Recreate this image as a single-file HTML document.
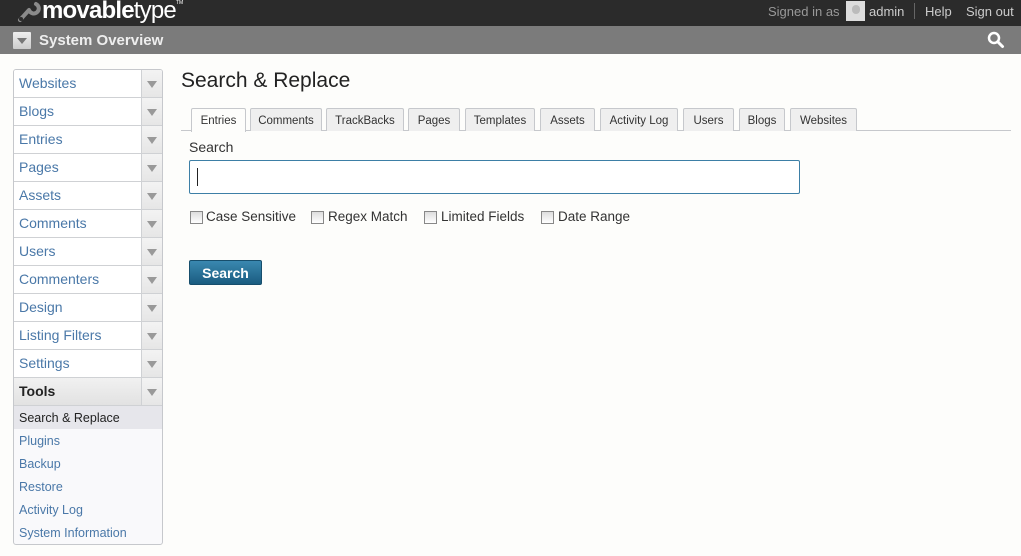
<!DOCTYPE html>
<html><head><meta charset="utf-8"><style>
*{box-sizing:border-box;margin:0;padding:0}
body{width:1021px;height:556px;background:#fdfdfb;font-family:"Liberation Sans",Arial,sans-serif;position:relative;overflow:hidden}
.top{position:absolute;left:0;top:0;width:1021px;height:26px;background:#2b2b2b}
.bar{position:absolute;left:0;top:26px;width:1021px;height:28px;background:#7b7b7b}
.abs{position:absolute}
.side{position:absolute;left:13px;top:69px;width:150px;height:476px;border:1px solid #c6c8cc;border-radius:3px;background:#f9f9fb;overflow:hidden}
.it{height:28px;border-bottom:1px solid #cfd1d4;background:#fff;position:relative;font-size:14px;color:#4a78a8;padding:5px 0 0 5px}
.it:after{content:"";position:absolute;right:0;top:0;width:20px;height:27px;border-left:1px solid #cfd1d4;background:linear-gradient(#f3f3f3,#e6e6e6)}
.it i{position:absolute;right:5px;top:11px;width:0;height:0;border-left:5px solid transparent;border-right:5px solid transparent;border-top:7px solid #999;z-index:2}
.it.t{background:linear-gradient(#f1f1f1,#e2e2e2);color:#222;font-weight:bold}
.sub{height:23px;font-size:12.5px;color:#4a78a8;padding:5px 0 0 5px}
.tab{position:absolute;top:108px;height:23px;border:1px solid #c6c8cc;border-bottom:none;border-radius:2px 2px 0 0;background:#efefef;font-size:11.5px;color:#333;text-align:center;padding-top:6px}
.cb{position:absolute;top:211px;width:13px;height:13px;border:1px solid #888;background:linear-gradient(#ddd,#fff)}
.cl{position:absolute;top:209px;font-size:13.5px;color:#333}
</style></head><body>
<div class="top"></div>
<svg class="abs" style="left:17px;top:1px" width="24" height="22" viewBox="0 0 24 22"><path d="M3 19 L12 9 M12 9 A5 5 0 1 0 19 3" stroke="#8a8a8a" stroke-width="4" fill="none" stroke-linecap="round"/><circle cx="4" cy="18" r="2" fill="#2b2b2b"/></svg>
<div class="abs" style="left:42px;top:-3px;font-size:24px;color:#fff;letter-spacing:-0.8px"><b>movable</b>type</div>
<div class="abs" style="left:176px;top:0;font-size:5px;color:#fff">TM</div>
<div class="abs" style="left:768px;top:4px;font-size:13px;color:#999">Signed in as</div>
<div class="abs" style="left:846px;top:1px;width:19px;height:20px;background:#ddd"><div style="margin:4px auto 0;width:8px;height:9px;border-radius:4px;background:#bbb"></div></div>
<div class="abs" style="left:869px;top:4px;font-size:13px;color:#ccc">admin</div>
<div class="abs" style="left:914px;top:3px;width:1px;height:16px;background:#666"></div>
<div class="abs" style="left:925px;top:4px;font-size:13px;color:#ccc">Help</div>
<div class="abs" style="left:966px;top:4px;font-size:13px;color:#ccc">Sign out</div>
<div class="bar"></div>
<div class="abs" style="left:13px;top:32px;width:18px;height:17px;background:linear-gradient(#eee,#ccc);border-radius:1px"><div style="margin:6px auto 0;width:0;height:0;border-left:5px solid transparent;border-right:5px solid transparent;border-top:6px solid #777"></div></div>
<div class="abs" style="left:39px;top:32px;font-size:15px;font-weight:bold;color:#eee">System Overview</div>
<svg class="abs" style="left:987px;top:31px" width="18" height="18" viewBox="0 0 18 18"><circle cx="7" cy="7" r="5" stroke="#fff" stroke-width="2.5" fill="none"/><path d="M11 11 L15.5 15.5" stroke="#fff" stroke-width="3" stroke-linecap="round"/></svg>
<div class="side">
<div class="it">Websites<i></i></div><div class="it">Blogs<i></i></div><div class="it">Entries<i></i></div><div class="it">Pages<i></i></div><div class="it">Assets<i></i></div><div class="it">Comments<i></i></div><div class="it">Users<i></i></div><div class="it">Commenters<i></i></div><div class="it">Design<i></i></div><div class="it">Listing Filters<i></i></div><div class="it">Settings<i></i></div><div class="it t">Tools<i></i></div>
<div class="sub" style="background:#e6e6eb;color:#222">Search &amp; Replace</div><div class="sub">Plugins</div><div class="sub">Backup</div><div class="sub">Restore</div><div class="sub">Activity Log</div><div class="sub">System Information</div>
</div>
<div class="abs" style="left:181px;top:69px;font-size:21px;color:#222">Search &amp; Replace</div>
<div class="abs" style="left:181px;top:130px;width:830px;height:1px;background:#c6c8cc"></div>
<div class="tab" style="left:191px;width:55px;background:#fdfdfb;height:24px">Entries</div>
<div class="tab" style="left:250px;width:72px">Comments</div>
<div class="tab" style="left:326px;width:78px">TrackBacks</div>
<div class="tab" style="left:408px;width:52px">Pages</div>
<div class="tab" style="left:465px;width:70px">Templates</div>
<div class="tab" style="left:540px;width:55px">Assets</div>
<div class="tab" style="left:600px;width:78px">Activity Log</div>
<div class="tab" style="left:683px;width:51px">Users</div>
<div class="tab" style="left:739px;width:46px">Blogs</div>
<div class="tab" style="left:790px;width:67px">Websites</div>
<div class="abs" style="left:189px;top:139px;font-size:14px;color:#333">Search</div>
<div class="abs" style="left:189px;top:160px;width:611px;height:34px;border:1px solid #3d7fa6;border-radius:2px;background:#fff"><div style="margin:7px 0 0 7px;width:1px;height:18px;background:#222"></div></div>
<div class="cb" style="left:190px"></div><div class="cl" style="left:206px">Case Sensitive</div>
<div class="cb" style="left:311px"></div><div class="cl" style="left:328px">Regex Match</div>
<div class="cb" style="left:424px"></div><div class="cl" style="left:441px">Limited Fields</div>
<div class="cb" style="left:541px"></div><div class="cl" style="left:558px">Date Range</div>
<div class="abs" style="left:189px;top:260px;width:73px;height:25px;background:linear-gradient(#3a88b0,#1a5c80);border:1px solid #174e6c;border-radius:2px;color:#fff;font-weight:bold;font-size:14px;text-align:center;padding-top:4px">Search</div>
</body></html>
